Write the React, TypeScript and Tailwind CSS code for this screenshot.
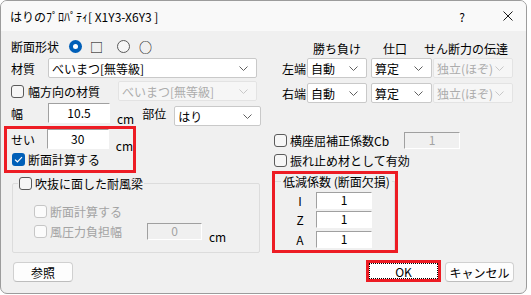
import clsx from 'clsx'

function Chevron({ disabled }: { disabled?: boolean }) {
  return (
    <svg width="9" height="5" viewBox="0 0 9 5" className="shrink-0">
      <path d="M0.5 0.5 L4.5 4.5 L8.5 0.5" fill="none" stroke={disabled ? '#c8c8c8' : '#606060'} strokeWidth="1" />
    </svg>
  )
}

function Select({ value, className, disabled }: { value: string; className: string; disabled?: boolean }) {
  return (
    <div
      className={clsx(
        'flex h-[20px] shrink-0 items-center justify-between rounded-[2px] border pl-[3px] pr-[8px]',
        disabled ? 'border-[#e3e3e3] bg-[#f6f6f6] text-[#acacac]' : 'border-[#c9c9c9] bg-white text-black',
        className,
      )}
    >
      <span className="whitespace-nowrap">{value}</span>
      <Chevron disabled={disabled} />
    </div>
  )
}

function Edit({ value, className, disabled }: { value: string; className: string; disabled?: boolean }) {
  return (
    <div
      className={clsx(
        'flex shrink-0 items-center justify-center border border-b-white border-l-[#a0a0a0] border-r-white border-t-[#a0a0a0] pb-[2px]',
        disabled ? 'bg-[#f0f0f0] text-[#a3a3a3]' : 'bg-white text-black',
        className,
      )}
    >
      {value}
    </div>
  )
}

function Check({ checked, disabled }: { checked?: boolean; disabled?: boolean }) {
  if (checked)
    return (
      <div className="flex h-[13px] w-[13px] shrink-0 items-center justify-center rounded-[3px] bg-[#005fb8]">
        <svg width="9" height="7" viewBox="0 0 9 7">
          <path d="M1 3.6 L3.4 5.8 L8 1.2" fill="none" stroke="white" strokeWidth="1.2" />
        </svg>
      </div>
    )
  return (
    <div
      className={clsx(
        'h-[13px] w-[13px] shrink-0 rounded-[3px] border',
        disabled ? 'border-[#c6c6c6] bg-[#fbfbfb]' : 'border-[#5a5a5a] bg-[#f6f6f6]',
      )}
    />
  )
}

function Radio({ selected }: { selected?: boolean }) {
  if (selected)
    return (
      <div className="flex h-[13px] w-[13px] shrink-0 items-center justify-center rounded-full bg-[#005fb8]">
        <div className="h-[5px] w-[5px] rounded-full bg-white" />
      </div>
    )
  return <div className="h-[13px] w-[13px] shrink-0 rounded-full border border-[#5a5a5a] bg-[#f6f6f6]" />
}

function Button({ label, className }: { label: string; className: string }) {
  return (
    <div
      className={clsx(
        'flex shrink-0 items-center justify-center rounded-[4px] border border-[#d0d0d0] border-b-[#bdbdbd] bg-[#fdfdfd] text-black',
        className,
      )}
    >
      {label}
    </div>
  )
}

export default function App() {
  return (
    <div className="h-[295px] w-[531px] bg-white font-['Noto_Sans_CJK_JP','Noto_Sans',sans-serif] text-[12px] leading-[15px] text-black">
      <div className="flex h-[294px] w-[527px] flex-col overflow-hidden rounded-[7px] border border-[#9c9c9c] bg-[#f0f0f0]">
        {/* Title bar */}
        <div className="flex h-[30px] shrink-0 items-center bg-[#f9f9f9] pl-[9px] pr-[13px]">
          <span>はりのﾌﾟﾛﾊﾟﾃｨ[ X1Y3-X6Y3 ]</span>
          <span className="ml-auto">?</span>
          <svg width="10" height="10" viewBox="0 0 10 10" className="ml-[38px]">
            <path d="M0.5 0.5 L9.5 9.5 M9.5 0.5 L0.5 9.5" stroke="#1a1a1a" strokeWidth="1" />
          </svg>
        </div>

        <div className="flex flex-1">
          {/* Left column */}
          <div className="flex w-[264px] shrink-0 flex-col">
            <div className="mt-[5px] flex h-[20px] items-center pl-[10px]">
              <span className="w-[58px]">断面形状</span>
              <Radio selected />
              <span className="ml-[8px] text-[13px]">□</span>
              <div className="ml-[14px]">
                <Radio />
              </div>
              <span className="ml-[9px] text-[13px]">○</span>
            </div>

            <div className="mt-[2px] flex h-[20px] items-center pl-[10px]">
              <span className="w-[37px]">材質</span>
              <Select value="べいまつ[無等級]" className="w-[209px]" />
            </div>

            <div className="mt-[3px] flex h-[20px] items-center pl-[10px]">
              <div className="flex w-[107px] items-center">
                <Check />
                <span className="ml-[4px]">幅方向の材質</span>
              </div>
              <Select value="べいまつ[無等級]" className="w-[139px]" disabled />
            </div>

            <div className="mt-[2px] flex h-[20px] items-start pl-[10px]">
              <span className="flex h-[20px] w-[37px] items-center">幅</span>
              <Edit value="10.5" className="h-[20px] w-[62px]" />
              <span className="ml-[7px] mt-[8px]">cm</span>
              <span className="ml-[8px] mt-[3px] w-[32px]">部位</span>
              <Select value="はり" className="mt-[3px] w-[87px]" />
            </div>

            <div className="ml-[3px] mt-[3px] flex h-[47px] w-[132px] flex-col border-[3px] border-[#ed1c24]">
              <div className="flex h-[20px] items-start pl-[4px]">
                <span className="flex h-[20px] w-[37px] items-center">せい</span>
                <Edit value="30" className="h-[20px] w-[62px]" />
                <span className="ml-[7px] mt-[9px]">cm</span>
              </div>
              <div className="flex h-[21px] items-center pl-[5px]">
                <Check checked />
                <span className="ml-[3px]">断面計算する</span>
              </div>
            </div>

            <fieldset className="ml-[11px] mt-[3px] h-[77px] w-[248px] rounded-[2px] border border-[#dcdcdc]">
              <legend className="ml-[5px] px-[1px]">
                <div className="flex h-[14px] items-center">
                  <Check />
                  <span className="ml-[3px]">吹抜に面した耐風梁</span>
                </div>
              </legend>
              <div className="mt-[13px] flex h-[16px] items-center pl-[21px] text-[#a3a3a3]">
                <Check disabled />
                <span className="ml-[3px]">断面計算する</span>
              </div>
              <div className="mt-[4px] flex h-[17px] items-start pl-[21px] text-[#a3a3a3]">
                <div className="flex h-[17px] w-[113px] items-center">
                  <Check disabled />
                  <span className="ml-[3px]">風圧力負担幅</span>
                </div>
                <Edit value="0" className="h-[17px] w-[55px]" disabled />
                <span className="ml-[7px] mt-[6px] text-black">cm</span>
              </div>
            </fieldset>

            <Button label="参照" className="ml-[12px] mt-[9px] h-[20px] w-[60px]" />
          </div>

          {/* Right column */}
          <div className="flex flex-1 flex-col">
            <div className="mt-[9px] flex h-[16px] items-center pl-[48px]">
              <span>勝ち負け</span>
              <span className="ml-[22px]">仕口</span>
              <span className="ml-[17px]">せん断力の伝達</span>
            </div>

            <div className="mt-[2px] flex h-[20px] items-center pl-[17px]">
              <span className="w-[25px]">左端</span>
              <Select value="自動" className="w-[60px]" />
              <Select value="算定" className="ml-[4px] w-[61px]" />
              <Select value="独立(ほぞ)" className="ml-[1px] w-[80px]" disabled />
            </div>

            <div className="mt-[5px] flex h-[20px] items-center pl-[17px]">
              <span className="w-[25px]">右端</span>
              <Select value="自動" className="w-[60px]" />
              <Select value="算定" className="ml-[4px] w-[61px]" />
              <Select value="独立(ほぞ)" className="ml-[1px] w-[80px]" disabled />
            </div>

            <div className="mt-[27px] flex h-[20px] items-center pl-[9px]">
              <div className="flex w-[130px] items-center">
                <Check />
                <span className="ml-[3px]">横座屈補正係数Cb</span>
              </div>
              <Edit value="1" className="h-[17px] w-[56px]" disabled />
            </div>

            <div className="flex h-[20px] items-center pl-[9px]">
              <Check />
              <span className="ml-[3px]">振れ止め材として有効</span>
            </div>

            <div className="ml-[7px] mt-[1px] flex h-[82px] w-[126px] flex-col border-[3px] border-[#ed1c24]">
              <fieldset className="h-full border-r border-t border-[#dcdcdc]">
                <legend className="ml-[6px] px-[2px]">
                  <div className="flex h-[14px] items-center">低減係数 (断面欠損)</div>
                </legend>
                {[
                  ['I', 'mt-[4px]'],
                  ['Z', 'mt-[2px]'],
                  ['A', 'mt-[3px]'],
                ].map(([k, m]) => (
                  <div key={k} className={clsx('flex h-[17px] items-center', m)}>
                    <span className="w-[41px] pl-[9px] text-center">{k}</span>
                    <Edit value="1" className="h-[17px] w-[56px]" />
                  </div>
                ))}
              </fieldset>
            </div>

            <div className="mt-[7px] flex items-start pl-[101px]">
              <div className="flex h-[22px] w-[75px] border-[3px] border-[#ed1c24]">
                <div className="flex flex-1 items-center justify-center border border-dotted border-black bg-white">OK</div>
              </div>
              <Button label="キャンセル" className="ml-[4px] mt-[2px] h-[20px] w-[69px]" />
            </div>
          </div>
        </div>
      </div>
    </div>
  )
}
